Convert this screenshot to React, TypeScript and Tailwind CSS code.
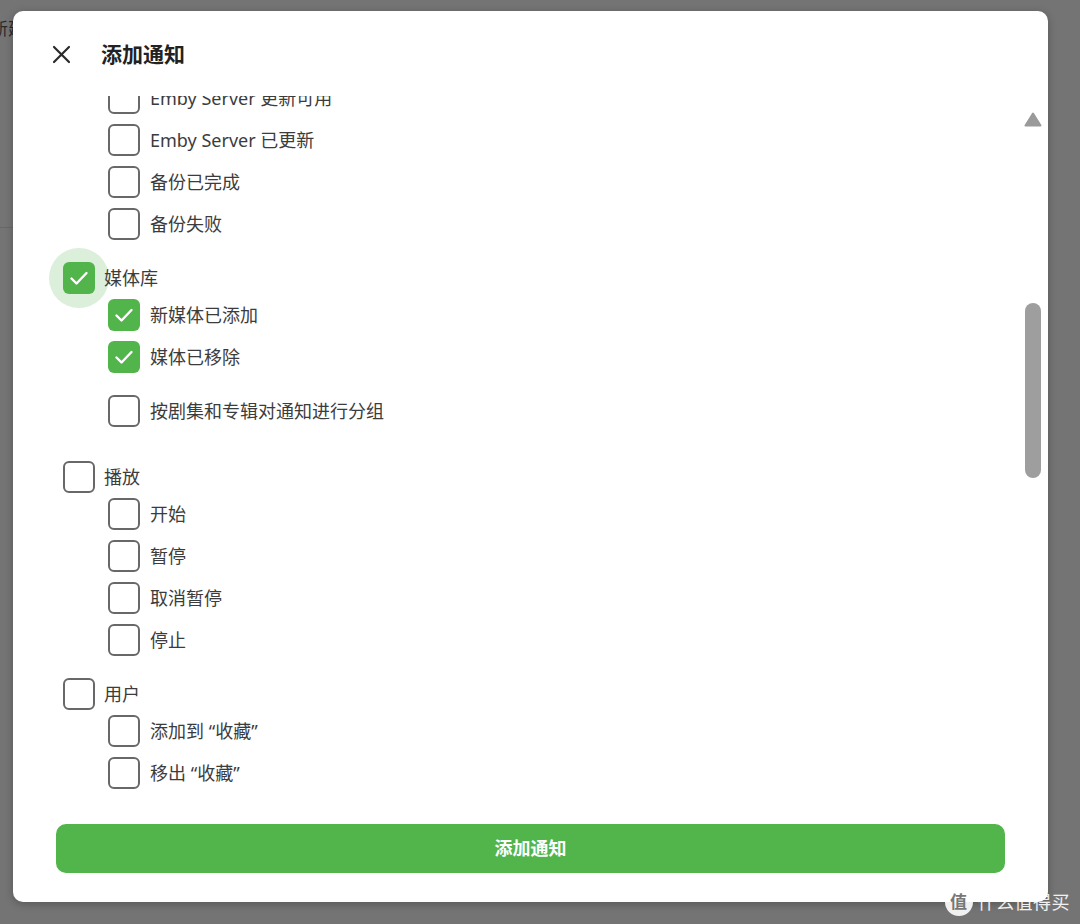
import React from "react";

const FONT = { fontFamily: '"Noto Sans", "Noto Sans CJK SC", sans-serif' };

function Box({ checked }: { checked?: boolean }) {
  if (checked) {
    return (
      <span className="flex h-[32px] w-[32px] shrink-0 items-center justify-center rounded-[6px] bg-[#52b54b]">
        <svg width="32" height="32" viewBox="0 0 32 32" fill="none">
          <path d="M8.5 16.5 L13.5 21.5 L23.5 11" stroke="#fff" strokeWidth="2.4" strokeLinecap="round" strokeLinejoin="round" />
        </svg>
      </span>
    );
  }
  return <span className="block h-[32px] w-[32px] shrink-0 rounded-[6px] border-2 border-[#686868] bg-white" />;
}

function Child({ label, checked }: { label: string; checked?: boolean }) {
  return (
    <div className="flex h-[42px] items-center pl-[95px]">
      <Box checked={checked} />
      <span className="ml-[10px] text-[18px] text-[#3c3c3c]">{label}</span>
    </div>
  );
}

function Parent({ label, checked, focused }: { label: string; checked?: boolean; focused?: boolean }) {
  return (
    <div className="flex h-[32px] items-center pl-[50px]">
      <span className="relative flex h-[32px] w-[32px] items-center justify-center">
        {focused && <span className="absolute left-[-14px] top-[-14px] h-[60px] w-[60px] rounded-full bg-[#dcefdb]" />}
        <span className="relative">
          <Box checked={checked} />
        </span>
      </span>
      <span className="relative ml-[9px] text-[18px] text-[#3c3c3c]">{label}</span>
    </div>
  );
}

export default function App() {
  return (
    <div className="relative flex h-[924px] w-[1080px] overflow-hidden bg-[#747474]" style={FONT}>
      {/* page behind the overlay, peeking out at the left edge */}
      <div className="flex w-[13px] shrink-0 flex-col overflow-hidden">
        <div className="ml-[-9px] mt-[16px] whitespace-nowrap text-[17px] text-[#2a2a2a]">新建</div>
        <div className="mt-[185px] h-px w-full bg-[#686868]" />
      </div>

      <div className="mt-[11px] flex h-[891px] w-[1035px] flex-col overflow-hidden rounded-[10px] bg-white shadow-[0_2px_8px_rgba(0,0,0,0.25)]">
        {/* header */}
        <div className="flex h-[85px] shrink-0 items-start pl-[39px] pt-[33px]">
          <svg width="19" height="19" viewBox="0 0 19 19" fill="none" className="mt-[1px] shrink-0">
            <path d="M2 2 L17 17 M17 2 L2 17" stroke="#2b2b2b" strokeWidth="2.2" strokeLinecap="round" />
          </svg>
          <h1 className="ml-[30px] text-[21px] font-bold leading-[21px] text-[#222]">添加通知</h1>
        </div>

        {/* scrolling list */}
        <div className="flex h-[710px] shrink-0 overflow-hidden">
          <div className="flex-1 overflow-hidden">
            <div className="mt-[-19px]">
              <Child label="Emby Server 更新可用" />
              <Child label="Emby Server 已更新" />
              <Child label="备份已完成" />
              <Child label="备份失败" />

              <div className="h-[17px]" />
              <Parent label="媒体库" checked focused />
              <Child label="新媒体已添加" checked />
              <Child label="媒体已移除" checked />
              <div className="h-[12px]" />
              <Child label="按剧集和专辑对通知进行分组" />

              <div className="h-[29px]" />
              <Parent label="播放" />
              <Child label="开始" />
              <Child label="暂停" />
              <Child label="取消暂停" />
              <Child label="停止" />

              <div className="h-[17px]" />
              <Parent label="用户" />
              <Child label="添加到 “收藏”" />
              <Child label="移出 “收藏”" />
            </div>
          </div>

          {/* scrollbar */}
          <div className="mr-[6px] flex w-[18px] shrink-0 flex-col items-center">
            <svg width="18" height="15" viewBox="0 0 18 15" className="mt-[16px]">
              <path d="M9 1.5 L16.5 13.5 L1.5 13.5 Z" fill="#9a9a9a" stroke="#9a9a9a" strokeWidth="2" strokeLinejoin="round" />
            </svg>
            <div className="mt-[176px] h-[175px] w-[16px] rounded-full bg-[#9e9e9e]" />
          </div>
        </div>

        {/* footer */}
        <div className="flex flex-1 items-start px-[43px] pt-[18px]">
          <button className="flex h-[49px] w-full items-center justify-center rounded-[10px] bg-[#52b54b] text-[18px] font-bold text-white">
            添加通知
          </button>
        </div>
      </div>

      {/* site watermark */}
      <div className="absolute bottom-[8px] right-[10px] flex items-center gap-[5px] text-white/90">
        <span className="flex h-[28px] w-[28px] items-center justify-center rounded-full bg-white/90 text-[17px] font-bold text-[#777]">值</span>
        <span className="text-[18px] tracking-[0.5px]">什么值得买</span>
      </div>
    </div>
  );
}
